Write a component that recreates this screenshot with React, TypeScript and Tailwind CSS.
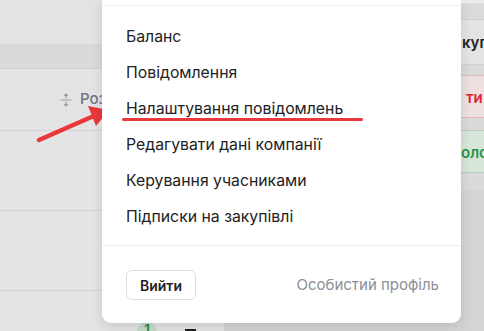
import { useState } from "react";

const menuItems = [
  "Баланс",
  "Повідомлення",
  "Налаштування повідомлень",
  "Редагувати дані компанії",
  "Керування учасниками",
  "Підписки на закупівлі",
];

const font = { fontFamily: "Inter, 'Noto Sans', sans-serif" };

function SortIcon() {
  return (
    <svg width="12" height="16" viewBox="0 0 12 16" fill="none" stroke="#9ca0a8" strokeWidth="1.2" strokeLinecap="round">
      <path d="M6 2v4M4.5 3.5L6 2l1.5 1.5" />
      <path d="M1 8h10" />
      <path d="M6 10v4M4.5 12.5L6 14l1.5-1.5" />
    </svg>
  );
}

function Arrow() {
  return (
    <svg className="absolute left-0 top-0 pointer-events-none" width="130" height="160" viewBox="0 0 130 160">
      <path d="M39 140L96 115" stroke="#e8383c" strokeWidth="4.5" strokeLinecap="round" />
      <path d="M109 110L88 106L96 126Z" fill="#e8383c" />
    </svg>
  );
}

export default function App() {
  const [active] = useState(2);

  return (
    <div className="relative w-[484px] h-[331px] overflow-hidden bg-[#e4e4e4]" style={font}>
      {/* dimmed table behind the dropdown */}
      <div className="flex h-full">
        <div className="flex flex-col w-[461px] shrink-0">
          <div className="h-[44px] bg-[#e3e3e3]" />
          <div className="h-[25px] bg-[#d9dadb] border-b border-[#d0d1d3]" />
          <div className="h-[62px] flex items-center pl-[60px] gap-2 border-b border-[#d3d3d3]">
            <SortIcon />
            <span className="text-[15px] font-medium text-[#6f7581]">Розмір</span>
          </div>
          <div className="h-[80px] border-b border-[#d3d3d3]" />
          <div className="h-[80px] border-b border-[#d3d3d3]" />
          <div className="flex flex-1">
            <div className="relative w-[225px] border-r border-[#d6d6d6]">
              <div className="absolute left-[137px] top-[31px] w-[20px] h-[20px] rounded-full bg-[#c5dbc8] flex justify-center pt-[1px] text-[13px] font-bold text-[#2f8a4b] leading-none">
                1
              </div>
              <div className="absolute left-[185px] top-[38px] w-[11px] h-[6px] bg-[#222]" />
            </div>
            <div className="flex-1 bg-[#d5d5d5]" />
          </div>
        </div>
        <div className="flex flex-col flex-1 overflow-hidden whitespace-nowrap text-[15px] font-semibold">
          <div className="h-[3px] bg-[#ececec]" />
          <div className="h-[17px] bg-[#dadbdc] border-b border-[#cfcfcf]" />
          <div className="h-[45px] bg-[#e4e4e4] border-b border-[#d2d2d2] flex items-center pt-[3px] pl-[1px] text-[#222]">купівлі</div>
          <div className="h-[10px] bg-[#dadada]" />
          <div className="h-[43px] bg-[#ece0e1] border-y border-[#e2b8bb] flex items-center pt-[3px] pl-[5px] text-[#e0232e]">ти</div>
          <div className="h-[12px] bg-[#dadada]" />
          <div className="h-[43px] bg-[#d8e6da] border-y border-[#b3d0b9] flex items-center pt-[4px] text-[#24944a]">ологія</div>
          <div className="h-[17px] bg-[#dadada]" />
          <div className="flex-1 bg-[#d4d4d4]" />
        </div>
      </div>

      <Arrow />

      {/* dropdown */}
      <div className="absolute left-[102px] top-0 w-[359px] h-[323px] bg-white rounded-b-[9px] shadow-[0_4px_12px_rgba(0,0,0,0.12)] flex flex-col">
        <div className="h-[6px] border-b border-[#efefef]" />
        <div className="flex flex-col pt-[13px] pb-[10px] border-b border-[#eeeeee]">
          {menuItems.map((item, i) => (
            <div key={item} className="relative h-[36px] flex items-center pl-[24px] text-[15.8px] text-[#222]">
              {item}
              {i === active && (
                <div className="absolute left-[20px] top-[27px] w-[241px] h-[3px] rounded-full bg-[#e8383c]" />
              )}
            </div>
          ))}
        </div>
        <div className="flex items-center justify-between pl-[24px] pr-[22px] pt-[24px]">
          <button className="h-[30px] w-[70px] rounded-[6px] border border-[#dedede] text-[14px] font-semibold text-[#222]">
            Вийти
          </button>
          <span className="text-[15px] text-[#8b8e97]">Особистий профіль</span>
        </div>
      </div>
    </div>
  );
}
